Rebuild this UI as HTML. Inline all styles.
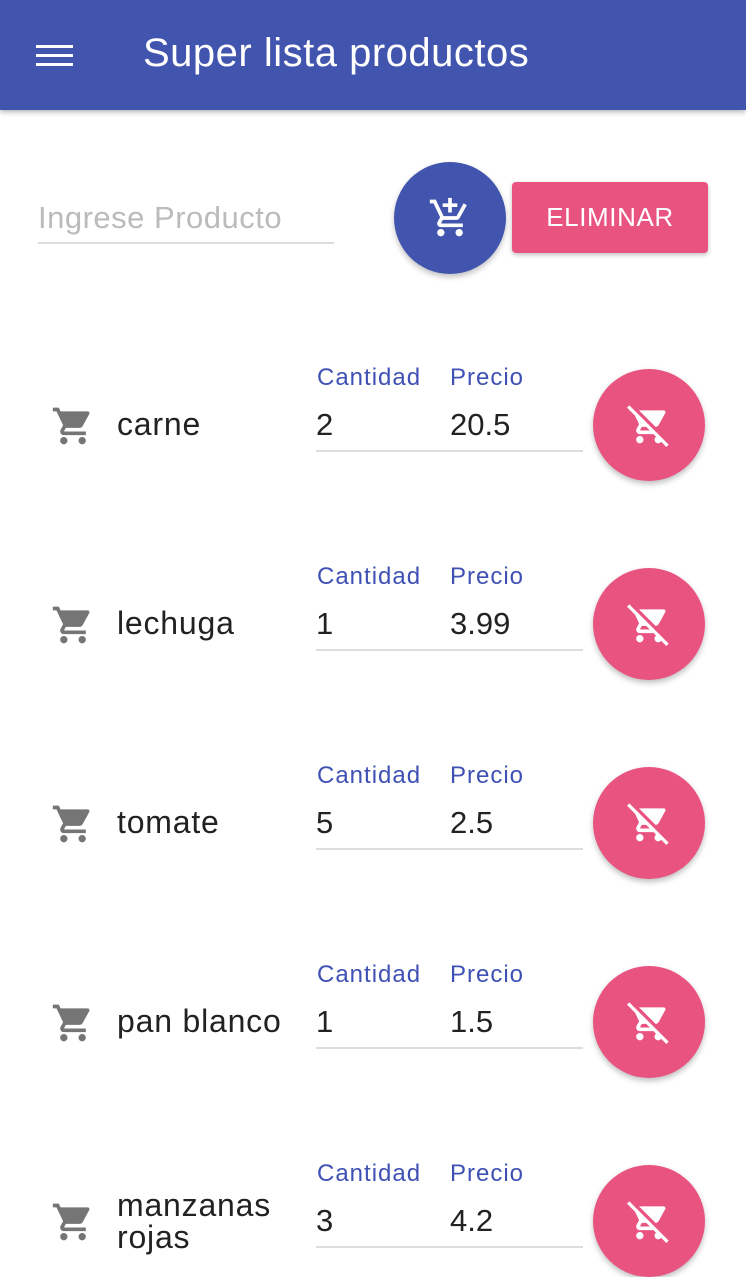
<!DOCTYPE html>
<html><head><meta charset="utf-8"><style>
*{margin:0;padding:0;box-sizing:border-box}
body{width:746px;height:1252px;overflow:hidden;background:#fff;font-family:"Liberation Sans",sans-serif;position:relative}
.hdr{position:absolute;left:0;top:0;width:746px;height:110px;background:#4154ae;box-shadow:0 2px 5px rgba(0,0,0,.3)}
.hdr .t{position:absolute;left:143px;top:31px;font-size:40px;color:#fff;letter-spacing:.5px}
.bar{position:absolute;left:36px;width:37px;height:3px;background:#fff}
.abs{position:absolute}
.fab{position:absolute;width:112px;height:112px;border-radius:50%;box-shadow:0 3px 6px rgba(0,0,0,.25);display:flex;align-items:center;justify-content:center}
.pink{background:#e95380}
.lbl{position:absolute;font-size:24px;color:#3f51b5;letter-spacing:1px}
.val{position:absolute;font-size:31px;color:#222}
.name{position:absolute;font-size:32px;color:#222;left:117px;letter-spacing:.8px}
.ul{position:absolute;left:316px;width:267px;height:2px;background:#ddd}
</style></head><body>
<div class="hdr">
<div class="bar" style="top:45px"></div><div class="bar" style="top:54px"></div><div class="bar" style="top:63px"></div>
<div class="t">Super lista productos</div>
</div>
<div class="abs" style="left:38px;top:200px;font-size:31px;color:#bbb;letter-spacing:.5px">Ingrese Producto</div>
<div class="abs" style="left:38px;top:242px;width:296px;height:2px;background:#ddd"></div>
<div class="fab" style="left:394px;top:162px;background:#4154ae"><svg width="44" height="44" viewBox="0 0 24 24" fill="#fff"><path d="M11 9h2V6h3V4h-3V1h-2v3H8v2h3v3zm-4 9c-1.1 0-1.990.9-1.99 2S5.9 22 7 22s2-.9 2-2-.9-2-2-2zm10 0c-1.1 0-1.99.9-1.99 2s.89 2 1.99 2 2-.9 2-2-.9-2-2-2zm-9.83-3.25l.03-.12.9-1.63h7.45c.75 0 1.41-.41 1.75-1.03l3.86-7.01L19.42 4h-.01l-1.1 2-2.76 5H8.53l-.13-.27L6.16 6l-.95-2-.94-2H1v2h2l3.6 7.59-1.35 2.45c-.16.28-.25.61-.25.96 0 1.1.9 2 2 2h12v-2H7.42c-.13 0-.25-.11-.25-.25z"/></svg></div>
<div class="abs pink" style="left:512px;top:182px;width:196px;height:71px;border-radius:4px;box-shadow:0 2px 5px rgba(0,0,0,.25);color:#fff;font-size:26px;display:flex;align-items:center;justify-content:center;letter-spacing:.6px">ELIMINAR</div>

<div id="rows"></div>
<script>
var items=[["carne","2","20.5"],["lechuga","1","3.99"],["tomate","5","2.5"],["pan blanco","1","1.5"],["manzanas rojas","3","4.2"]];
var h="";
items.forEach(function(it,i){
 var y=i*199;
 var name = i==4 ? '<div class="name" style="top:1189px;line-height:32px">manzanas<br>rojas</div>' : '<div class="name" style="top:'+(406+y)+'px">'+it[0]+'</div>';
 h+='<svg class="abs" style="left:51px;top:'+(404+y)+'px" width="44" height="44" viewBox="0 0 24 24" fill="#757575"><path d="M7 18c-1.1 0-1.99.9-1.99 2S5.9 22 7 22s2-.9 2-2-.9-2-2-2zM1 2v2h2l3.6 7.59-1.35 2.45c-.16.28-.25.61-.25.96 0 1.1.9 2 2 2h12v-2H7.42c-.14 0-.25-.11-.25-.25l.03-.12.9-1.63h7.45c.75 0 1.41-.41 1.75-1.03l3.58-6.49c.08-.14.12-.31.12-.48 0-.55-.45-1-1-1H5.21l-.94-2H1zm16 16c-1.1 0-1.99.9-1.99 2s.89 2 1.99 2 2-.9 2-2-.9-2-2-2z"/></svg>';
 h+=name;
 h+='<div class="lbl" style="left:317px;top:'+(364+y)+'px">Cantidad</div><div class="lbl" style="left:450px;top:'+(364+y)+'px">Precio</div>';
 h+='<div class="val" style="left:316px;top:'+(407+y)+'px">'+it[1]+'</div><div class="val" style="left:450px;top:'+(407+y)+'px">'+it[2]+'</div>';
 h+='<div class="ul" style="top:'+(450+y)+'px"></div>';
 h+='<div class="fab pink" style="left:593px;top:'+(369+y)+'px"><svg width="44" height="44" viewBox="0 0 24 24" fill="#fff"><path d="M22.73 22.73L2.77 2.77 2 2l-.73-.73L0 2.54l4.39 4.39 2.21 4.66-1.35 2.45c-.16.28-.25.61-.25.96 0 1.1.9 2 2 2h7.46l1.38 1.38c-.5.36-.83.95-.83 1.62 0 1.1.89 2 1.99 2 .67 0 1.26-.33 1.62-.84L21.46 24l1.27-1.27zM7.42 15c-.14 0-.25-.11-.25-.25l.03-.12.9-1.63h2.36l2 2H7.42zm8.13-2c.75 0 1.41-.41 1.75-1.03l3.58-6.49c.08-.14.12-.31.12-.48 0-.55-.45-1-1-1H6.54l9.01 9zM7 18c-1.1 0-1.99.9-1.99 2S5.9 22 7 22s2-.9 2-2-.9-2-2-2z"/></svg></div>';
});
document.getElementById("rows").innerHTML=h;
</script>
</body></html>
